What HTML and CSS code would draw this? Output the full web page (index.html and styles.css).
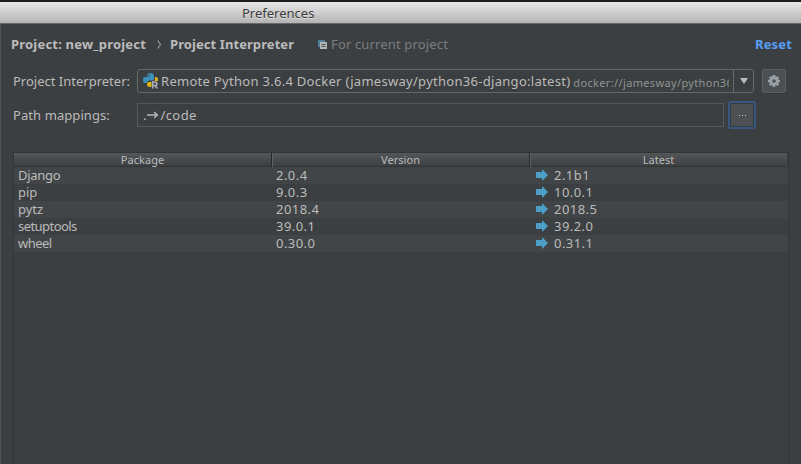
FILE: index.html
```html
<!DOCTYPE html>
<html lang="en">
<head>
<meta charset="utf-8">
<title>Preferences</title>
<link rel="stylesheet" href="styles.css">
</head>
<body>
<div class="window">
  <header class="titlebar"><span class="title">Preferences</span></header>
  <main class="content">
    <div class="breadcrumb">
      <b class="crumb-project">Project: new_project</b>
      <svg class="chevron" viewBox="0 0 5 9"><path d="M1 .5Q2 3 3.7 4.5Q2 6 1 8.5" /></svg>
      <b class="crumb-page">Project Interpreter</b>
      <svg class="scope-icon" viewBox="0 0 9 9"><path d="M0 0h7v2H2v5H0z" fill="#4d8199"/><path d="M2 2h7v7H2z" fill="#b4b7b9"/><path d="M3.5 4.5h4M3.5 6.5h4" stroke="#4b5052"/></svg>
      <span class="scope">For current project</span>
      <b class="reset">Reset</b>
    </div>
    <div class="row interpreter-row">
      <label class="label-interpreter">Project Interpreter:</label>
      <div class="combo">
        <div class="combo-value">
          <svg class="python" viewBox="0 0 16 16">
            <path d="M4 3Q4 0 7.5 0Q11 0 11 3V6Q11 7.5 9 7.5H6Q4 7.5 4 10H2Q0 10 0 7Q0 4 2 4H7V3.5H4z" fill="#3c91b9"/>
            <path d="M12 4h1q2 0 2 3v1H9v6H7q-3 0-3-2.5V11q0-2 2-2h4q2 0 2-2z" fill="#ddb415"/>
            <circle cx="6" cy="2" r=".7" fill="#24475b"/>
            <path d="M8.5 8.2H14.5v7H8.5z" fill="#3c3f41"/>
            <path d="M9.8 15.5V9h2.1q2 0 2 1.8T12 12.6H9.8M11.8 12.6L14.4 15.5" fill="none" stroke="#aeb0bc" stroke-width="1.5"/>
          </svg>
          <span class="remote">Remote Python 3.6.4 Docker (jamesway/python36-django:latest)</span>
          <span class="url">docker://jamesway/python36</span>
        </div>
        <div class="combo-button"><svg viewBox="0 0 8 6"><path d="M0 0H8L4 6z" fill="#bbb"/></svg></div>
      </div>
      <div class="gear-button"><svg viewBox="-6 -6 12 12"><g stroke="#98a1a7" stroke-width="2.6"><path d="M0-6V6M-6 0H6M-4.2-4.2L4.2 4.2M-4.2 4.2L4.2-4.2"/></g><circle r="3.2" fill="#4c5052" stroke="#98a1a7" stroke-width="3"/></svg></div>
    </div>
    <div class="row mapping-row">
      <label class="label-mapping">Path mappings:</label>
      <div class="field"><span>.</span><svg viewBox="0 0 12 8"><path d="M0 4H10M7 1L10.5 4L7 7" fill="none" stroke="#bbb" stroke-width="1.3"/></svg><span class="path">/code</span></div>
      <div class="browse"><i></i><i></i><i></i></div>
    </div>
    <div class="table">
      <div class="head"><span class="h-package">Package</span><span class="h-version">Version</span><span class="h-latest">Latest</span></div>
      <div class="item"><span class="name">Django</span><span class="num">2.0.4</span><svg viewBox="0 0 12 12"><path d="M0 3H6V0L12 6L6 12V9H0z"/></svg><span class="num">2.1b1</span></div>
      <div class="item"><span>pip</span><span class="num">9.0.3</span><svg viewBox="0 0 12 12"><path d="M0 3H6V0L12 6L6 12V9H0z"/></svg><span class="num">10.0.1</span></div>
      <div class="item"><span>pytz</span><span class="num">2018.4</span><svg viewBox="0 0 12 12"><path d="M0 3H6V0L12 6L6 12V9H0z"/></svg><span class="num">2018.5</span></div>
      <div class="item"><span class="name tight">setuptools</span><span class="num">39.0.1</span><svg viewBox="0 0 12 12"><path d="M0 3H6V0L12 6L6 12V9H0z"/></svg><span class="num">39.2.0</span></div>
      <div class="item"><span class="name tight">wheel</span><span class="num">0.30.0</span><svg viewBox="0 0 12 12"><path d="M0 3H6V0L12 6L6 12V9H0z"/></svg><span class="num">0.31.1</span></div>
    </div>
  </main>
</div>
</body>
</html>
```
FILE: styles.css
```css
* { box-sizing: border-box; }
body { margin: 0; overflow: hidden; background: #3c3f41; }
svg { display: block; flex: none; }
.window { height: 464px; display: flex; flex-direction: column; border-top: 2px solid #1e1d1d; font: 13px/17px "Noto Sans", sans-serif; color: #bbb; white-space: nowrap; }
.titlebar { height: 22px; flex: none; padding: 3px 0 0 242px; background: linear-gradient(#e8e8e8, #b4b4b4); border-bottom: 1px solid #686868; color: #3b3b3b; text-shadow: 0 1px #dedede; }
.content { flex: 1; display: flex; flex-direction: column; border-left: 1px solid #555; padding-left: 10px; min-height: 0; }
.breadcrumb { display: flex; align-items: center; height: 17px; margin-top: 12px; flex: none; }
.crumb-project { width: 146px; letter-spacing: .2px; }
.chevron { width: 5px; height: 9px; fill: none; stroke: #bbb; }
.crumb-page { width: 148px; margin-left: 8px; letter-spacing: .08px; }
.scope-icon { width: 9px; height: 9px; }
.scope { margin-left: 4px; color: #7b7d7f; letter-spacing: .15px; }
.reset { margin-left: auto; margin-right: 9px; color: #589df6; letter-spacing: .15px; }
.row { display: flex; align-items: center; flex: none; padding-left: 2px; }
.interpreter-row { height: 24px; margin-top: 16px; }
.row label { width: 124px; flex: none; }
.label-mapping { letter-spacing: .08px; }
.combo { display: flex; width: 617px; height: 24px; border: 1px solid #656768; border-radius: 3px; }
.combo-value { width: 595px; flex: none; display: flex; align-items: center; padding-left: 5px; overflow: hidden; }
.python { width: 16px; height: 16px; margin-right: 2px; }
.remote { flex: none; letter-spacing: .29px; }
.url { margin-left: 3px; color: #919394; font-size: 11px; padding-top: 2px; flex: 1; min-width: 0; overflow: hidden; margin-right: 4px; letter-spacing: .35px; }
.combo-button { flex: 1; border-left: 1px solid #656768; display: flex; align-items: center; justify-content: center; }
.combo-button svg { width: 8px; height: 6px; }
.gear-button { width: 24px; height: 24px; margin-left: 8px; display: flex; align-items: center; justify-content: center; background: #4c5052; border: 1px solid #5c6061; border-radius: 2px; box-shadow: 0 1px #343738; }
.gear-button svg { width: 12px; height: 12px; }
.mapping-row { height: 28px; margin-top: 8px; }
.field { width: 587px; height: 24px; border: 1px solid #555859; padding-left: 5px; display: flex; align-items: center; }
.field svg { width: 12px; height: 8px; margin-left: 1px; }
.path { letter-spacing: .4px; margin-left: 1px; }
.browse { width: 28px; height: 28px; margin-left: 4px; border: 2px solid #365880; border-radius: 3px; display: flex; align-items: center; justify-content: center; gap: 2px; background: #4c5052; box-shadow: inset 0 0 0 1px #353b41; }
.browse i { width: 1px; height: 1px; background: #c4c4c4; }
.table { width: 776px; margin: 23px 0 0 2px; flex: 1; border: 1px solid #323435; border-bottom: 0; }
.head { display: grid; grid-template-columns: 257px 258px 258px; height: 14px; margin-right: 1px; font-size: 11px; line-height: 14px; text-align: center; background: linear-gradient(#53575a, #3d4042); border-bottom: 1px solid #303233; color: #bbb; letter-spacing: .05px; }
.head span + span { border-left: 1px solid #28292a; box-shadow: inset 1px 0 #606365; }
.item { display: grid; grid-template-columns: 258px 260px 18px 1fr; align-items: center; height: 17px; padding-left: 4px; }
.item:nth-child(even) { background: #414547; }
.item svg { width: 12px; height: 12px; margin-bottom: 1px; fill: #4d9fca; }
.name { letter-spacing: -.3px; }
.tight { letter-spacing: -.55px; }
.num { letter-spacing: .45px; }
```
